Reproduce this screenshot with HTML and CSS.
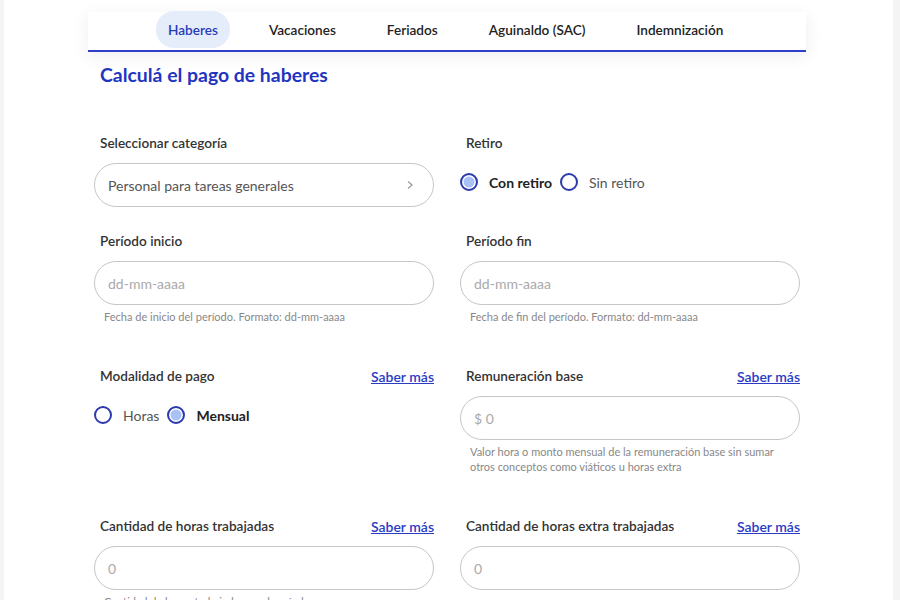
FILE: index.html
```html
<!DOCTYPE html>
<html lang="es">
<head>
    <meta charset="UTF-8">
    <meta name="viewport" content="width=device-width, initial-scale=1.0">
    <title>Calculá el pago de haberes</title>
    <link rel="stylesheet" href="styles.css">
</head>
<body>
    <div class="page">
        <div class="calc">
            <nav class="tabs">
                <a class="tab active" href="#">Haberes</a>
                <a class="tab" href="#">Vacaciones</a>
                <a class="tab" href="#">Feriados</a>
                <a class="tab" href="#">Aguinaldo (SAC)</a>
                <a class="tab" href="#">Indemnización</a>
            </nav>

            <h1 class="title">Calculá el pago de haberes</h1>

            <form class="form">
                <div class="field">
                    <div class="label-row"><label>Seleccionar categoría</label></div>
                    <div class="select">
                        <span>Personal para tareas generales</span>
                        <svg width="10" height="10" viewBox="0 0 10 10"><polyline points="3,1.5 7,5 3,8.5" fill="none" stroke="#9a9a9a" stroke-width="1.2"/></svg>
                    </div>
                </div>
                <div class="field">
                    <div class="label-row"><label>Retiro</label></div>
                    <div class="radios">
                        <span class="radio checked"></span><span class="radio-text bold">Con retiro</span>
                        <span class="radio"></span><span class="radio-text">Sin retiro</span>
                    </div>
                </div>

                <div class="field">
                    <div class="label-row"><label>Período inicio</label></div>
                    <input class="input" type="text" placeholder="dd-mm-aaaa">
                    <p class="help">Fecha de inicio del período. Formato: dd-mm-aaaa</p>
                </div>
                <div class="field">
                    <div class="label-row"><label>Período fin</label></div>
                    <input class="input" type="text" placeholder="dd-mm-aaaa">
                    <p class="help">Fecha de fin del período. Formato: dd-mm-aaaa</p>
                </div>

                <div class="field">
                    <div class="label-row"><label>Modalidad de pago</label><a href="#" class="more">Saber más</a></div>
                    <div class="radios">
                        <span class="radio"></span><span class="radio-text">Horas</span>
                        <span class="radio checked"></span><span class="radio-text bold">Mensual</span>
                    </div>
                </div>
                <div class="field">
                    <div class="label-row"><label>Remuneración base</label><a href="#" class="more">Saber más</a></div>
                    <input class="input" type="text" placeholder="$ 0">
                    <p class="help">Valor hora o monto mensual de la remuneración base sin sumar otros conceptos como viáticos u horas extra</p>
                </div>

                <div class="field">
                    <div class="label-row"><label>Cantidad de horas trabajadas</label><a href="#" class="more">Saber más</a></div>
                    <input class="input" type="text" placeholder="0">
                    <p class="help">Cantidad de horas trabajadas en el período</p>
                </div>
                <div class="field">
                    <div class="label-row"><label>Cantidad de horas extra trabajadas</label><a href="#" class="more">Saber más</a></div>
                    <input class="input" type="text" placeholder="0">
                </div>
            </form>
        </div>
    </div>
</body>
</html>
```

FILE: styles.css
```css
body {
    margin: 0;
    font-family: Lato, "Open Sans", sans-serif;
    background-color: #f4f4f4;
    color: #333;
    overflow: hidden;
}
.page {
    width: 889px;
    height: 600px;
    margin-left: 4px;
    background-color: #fff;
}
.calc {
    width: 718px;
    margin-left: 84px;
    padding-top: 12px;
}
.tabs {
    display: flex;
    gap: 27px;
    height: 38px;
    padding-left: 68px;
    background-color: #fff;
    border-bottom: 2px solid #2f3ec4;
    box-shadow: 0 4px 18px rgba(0, 0, 0, 0.07);
}
.tab {
    display: flex;
    align-items: center;
    height: 37px;
    margin-top: -1px;
    padding: 0 12px;
    font-size: 13.6px;
    font-weight: 600;
    color: #222;
    text-decoration: none;
    border-radius: 18px;
}
.tab.active {
    background-color: #e5edfb;
    color: #2a3cb8;
}
.title {
    margin: 11px 0 0 12px;
    font-size: 19.4px;
    font-weight: 700;
    color: #1f35c2;
}
.form {
    display: grid;
    grid-template-columns: 340px 340px;
    column-gap: 26px;
    row-gap: 24px;
    margin: 47px 6px 0 6px;
}
.label-row {
    display: flex;
    justify-content: space-between;
    align-items: center;
    height: 20px;
    padding: 0 0 0 6px;
}
.label-row label {
    font-size: 13.6px;
    font-weight: 600;
    color: #333;
}
.more {
    font-size: 14px;
    font-weight: 600;
    color: #2a3cc4;
}
.select, .input {
    box-sizing: border-box;
    width: 100%;
    height: 44px;
    margin-top: 10px;
    border: 1px solid #c6c6c6;
    border-radius: 22px;
}
.select {
    display: flex;
    justify-content: space-between;
    align-items: center;
    padding: 0 18px 0 13px;
    font-size: 14px;
    color: #555;
}
.input {
    display: block;
    padding: 0 13px;
    font-family: inherit;
    font-size: 14px;
    color: #333;
    outline: none;
}
.input::placeholder {
    color: #aaa;
}
.help {
    margin: 4px 0 18px 10px;
    font-size: 11px;
    line-height: 15px;
    color: #888;
}
.radios {
    display: flex;
    align-items: center;
    height: 20px;
    margin-top: 19px;
}
.radio {
    box-sizing: border-box;
    width: 18px;
    height: 18px;
    border: 2px solid #2d3aae;
    border-radius: 50%;
    background-color: #fff;
}
.radio.checked {
    background-color: #a9c1f6;
    box-shadow: inset 0 0 0 1.5px #fff;
}
.radio-text {
    margin: 0 8px 0 11px;
    font-size: 14px;
    color: #555;
}
.radio-text.bold {
    font-weight: 700;
    color: #222;
}
```
